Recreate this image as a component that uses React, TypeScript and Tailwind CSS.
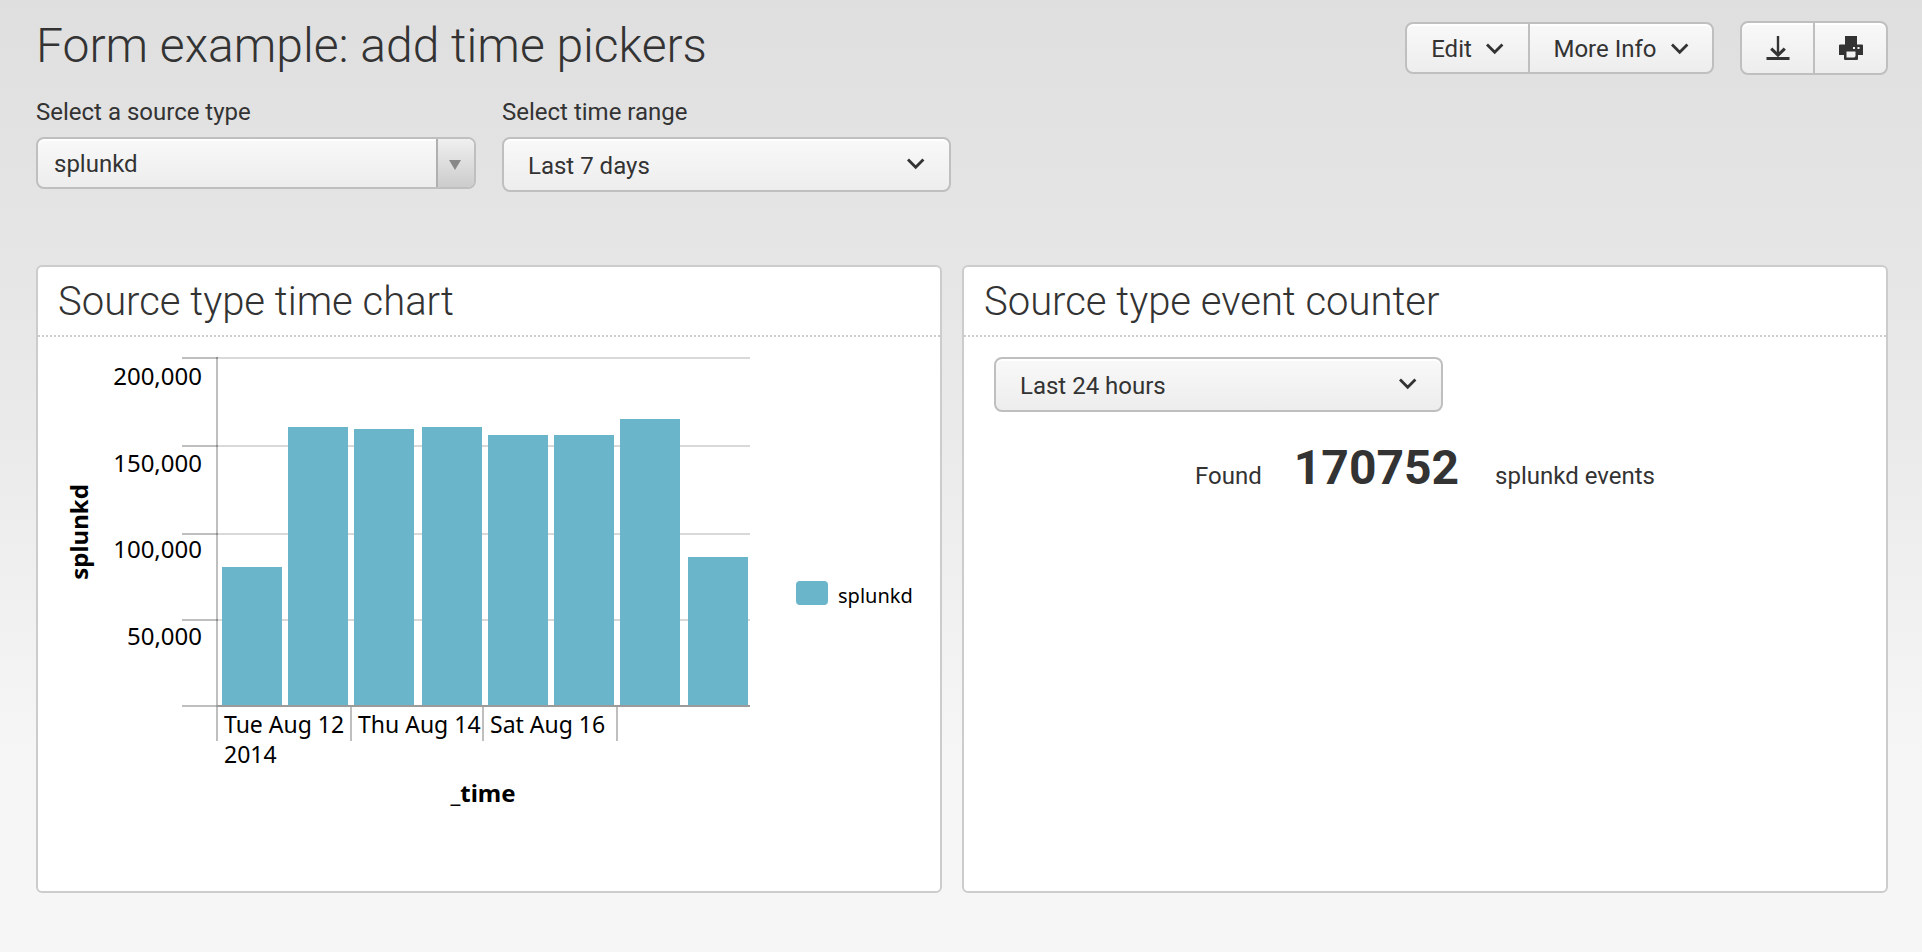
import React from "react";

const FONT = "font-['Roboto','Liberation_Sans',sans-serif]";
const CONTROL =
  "border-2 border-[#bfbfbf] bg-linear-to-b from-[#f9f9f9] to-[#ededed] text-[#333333] shadow-[inset_0_2px_0_#ffffff]";

function Chevron({ className = "" }: { className?: string }) {
  return (
    <svg className={className} width="18" height="12" viewBox="0 0 18 12" fill="none" stroke="#333333" strokeWidth="2.8" aria-hidden="true">
      <path d="M1 1.6 L8.7 9.3 L16.4 1.6" />
    </svg>
  );
}

function DownloadIcon() {
  return (
    <svg width="24" height="24" viewBox="0 0 24 24" fill="none" stroke="#333333" aria-hidden="true">
      <path d="M12 0 V19" strokeWidth="2.4" />
      <path d="M5.2 12.6 L12 19.2 L18.8 12.6" strokeWidth="3" />
      <path d="M0.5 22.5 H23.5" strokeWidth="3" />
    </svg>
  );
}

function PrinterIcon() {
  return (
    <svg width="24" height="24" viewBox="0 0 24 24" fill="#333333" aria-hidden="true">
      <path
        fillRule="evenodd"
        d="M6 0 H18 V8.5 H23.3 L24 9.2 V19 H19 V23.2 L18.2 24 H5.8 L5 23.2 V19 H0 V9.2 L0.7 8.5 H6 Z M7.5 15.5 V21.5 H15.3 L16.5 20.3 V15.5 Z M14 11 V13 H16 V11 Z M18.5 11 V13 H20.5 V11 Z"
      />
    </svg>
  );
}

function TimeRangeSelect({ id, label, value, options }: { id: string; label?: string; value: string; options: string[] }) {
  return (
    <div className="relative w-[449px] max-w-full">
      <select
        id={id}
        aria-label={label}
        defaultValue={value}
        className={`h-[55px] w-full appearance-none rounded-lg pt-0.5 pr-12 pl-6 text-2xl ${CONTROL}`}
      >
        {options.map((o) => (
          <option key={o}>{o}</option>
        ))}
      </select>
      <Chevron className="pointer-events-none absolute top-[21px] right-[26px]" />
    </div>
  );
}

const GRID = [
  { y: 358, labelY: 385, label: "200,000" },
  { y: 446, labelY: 472, label: "150,000" },
  { y: 534, labelY: 558, label: "100,000" },
  { y: 620, labelY: 645, label: "50,000" },
];

const BARS = [
  { x: 222, top: 567 },
  { x: 288, top: 427 },
  { x: 354, top: 429 },
  { x: 422, top: 427 },
  { x: 488, top: 435 },
  { x: 554, top: 435 },
  { x: 620, top: 419 },
  { x: 688, top: 557 },
];

const DAYS = [
  { x: 217, label: "Tue Aug 12" },
  { x: 351, label: "Thu Aug 14" },
  { x: 483, label: "Sat Aug 16" },
  { x: 617, label: "" },
];

function TimeChart() {
  return (
    <svg
      width="902"
      height="554"
      viewBox="38 337 902 554"
      role="img"
      aria-label="splunkd events over time"
      className="block h-auto max-w-full font-['Noto_Sans','DejaVu_Sans',sans-serif]"
    >
      <g stroke="#000000" strokeWidth="2">
        {GRID.map((g) => (
          <line key={g.y} x1="218" x2="750" y1={g.y} y2={g.y} strokeOpacity="0.15" />
        ))}
      </g>
      {BARS.map((b) => (
        <rect key={b.x} x={b.x} y={b.top} width="60" height={706 - b.top} fill="#6ab5ca" />
      ))}
      <g stroke="#000000" strokeOpacity="0.25" strokeWidth="2">
        {GRID.map((g) => (
          <line key={g.y} x1="182" x2="218" y1={g.y} y2={g.y} />
        ))}
        <line x1="217" x2="217" y1="357" y2="707" />
        <line x1="182" x2="218" y1="706" y2="706" />
        {DAYS.map((d) => (
          <line key={d.x} x1={d.x} x2={d.x} y1="705" y2="741" />
        ))}
      </g>
      <line x1="216" x2="750" y1="706" y2="706" stroke="#9b9b9b" strokeWidth="2" />
      <g fontSize="24" fill="#000000" textAnchor="end">
        {GRID.map((g) => (
          <text key={g.y} x="202" y={g.labelY}>
            {g.label}
          </text>
        ))}
      </g>
      <g fontSize="23" fill="#000000">
        {DAYS.map((d) => (
          <text key={d.x} x={d.x + 7} y="733">
            {d.label}
          </text>
        ))}
        <text x="224" y="763">2014</text>
      </g>
      <g fontSize="24" fontWeight="700" fill="#000000" textAnchor="middle">
        <text x="483" y="802">_time</text>
        <text transform="translate(88 532) rotate(-90)">splunkd</text>
      </g>
      <rect x="796" y="581" width="32" height="24" rx="4" fill="#6ab5ca" />
      <text x="838" y="603" fontSize="20" fill="#000000">splunkd</text>
    </svg>
  );
}

function Panel({ title, children }: { title: string; children: React.ReactNode }) {
  return (
    <section className="min-h-[628px] rounded-md border-2 border-[#cccccc] bg-white">
      <h2 className="border-b-2 border-dotted border-[#cccccc] px-5 pt-2.5 pb-2 text-[40px] leading-[50px] font-light">{title}</h2>
      {children}
    </section>
  );
}

export default function App() {
  return (
    <div className={`min-h-screen bg-linear-to-b from-[#dfdfdf] via-[#eaeaea] via-45% to-[#f6f6f6] to-80% pt-[21px] pr-[34px] pb-[59px] pl-9 text-2xl text-[#333333] ${FONT}`}>
      <header className="flex flex-wrap items-start justify-between gap-4">
        <h1 className="text-5xl leading-[50px] font-light">Form example: add time pickers</h1>
        <div className="flex items-center gap-[26px]">
          <div className={`flex h-[52px] rounded-lg ${CONTROL}`}>
            <button type="button" className="flex w-[123px] items-center justify-center gap-3.5 border-r-2 border-[#bfbfbf] pt-0.5">
              Edit
              <Chevron />
            </button>
            <button type="button" className="flex w-[182px] items-center justify-center gap-3.5 pt-0.5">
              More Info
              <Chevron />
            </button>
          </div>
          <div className={`flex h-[54px] rounded-lg ${CONTROL}`}>
            <button type="button" aria-label="Download" className="flex w-[73px] items-center justify-center border-r-2 border-[#bfbfbf]">
              <DownloadIcon />
            </button>
            <button type="button" aria-label="Print" className="flex w-[71px] items-center justify-center">
              <PrinterIcon />
            </button>
          </div>
        </div>
      </header>

      <form className="mt-5 flex flex-wrap items-start gap-[26px]">
        <div className="flex flex-col gap-2">
          <label htmlFor="sourcetype" className="leading-[34px]">Select a source type</label>
          <div className="relative w-[440px] max-w-full">
            <select
              id="sourcetype"
              defaultValue="splunkd"
              className={`h-[52px] w-full appearance-none rounded-lg pt-0.5 pr-12 pl-4 text-2xl ${CONTROL}`}
            >
              <option>splunkd</option>
              <option>splunk_web_access</option>
            </select>
            <span className="pointer-events-none absolute top-0.5 right-0.5 bottom-0.5 flex w-[38px] items-center justify-center rounded-r-md border-l-2 border-[#b0b0b0] bg-linear-to-b from-[#f0f0f0] to-[#cccccc] pt-1 pr-0.5">
              <svg width="12" height="10" viewBox="0 0 12 10" fill="#888888" aria-hidden="true">
                <path d="M0 0 H12 L6 10 Z" />
              </svg>
            </span>
          </div>
        </div>
        <div className="flex flex-col gap-2">
          <label htmlFor="timerange" className="leading-[34px]">Select time range</label>
          <TimeRangeSelect id="timerange" value="Last 7 days" options={["Last 7 days", "Last 24 hours"]} />
        </div>
      </form>

      <main className="mt-[73px] grid grid-cols-[453fr_463fr] gap-5">
        <Panel title="Source type time chart">
          <TimeChart />
        </Panel>
        <Panel title="Source type event counter">
          <div className="px-[30px] pt-5">
            <TimeRangeSelect id="counter-range" label="Event counter time range" value="Last 24 hours" options={["Last 24 hours", "Last 7 days"]} />
            <p className="mt-7 flex items-baseline justify-center gap-8">
              <span>Found</span>
              <strong className="pr-1 text-5xl leading-14 font-bold">170752</strong>
              <span>splunkd events</span>
            </p>
          </div>
        </Panel>
      </main>
    </div>
  );
}
